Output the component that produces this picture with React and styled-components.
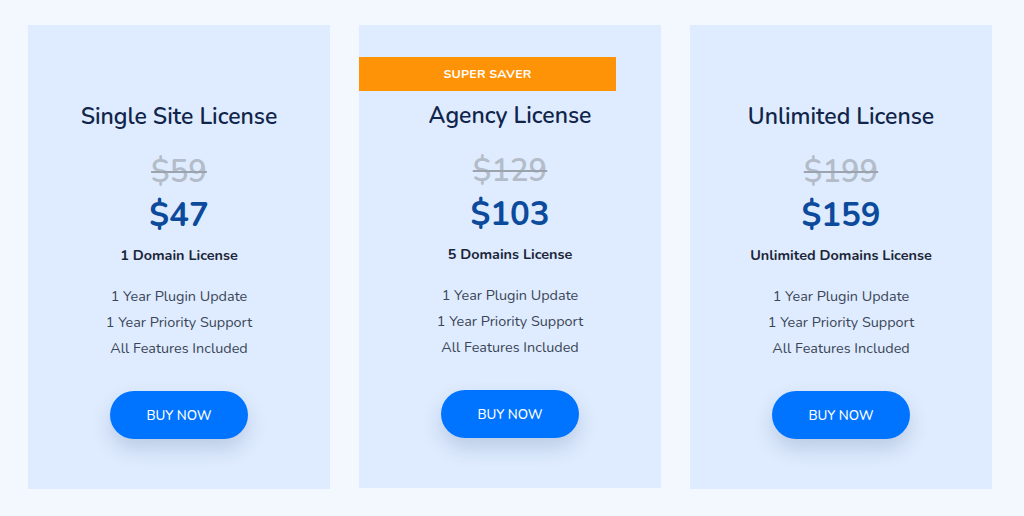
import React from "react";
import styled, { createGlobalStyle } from "styled-components";

const Global = createGlobalStyle`
  html, body { margin: 0; padding: 0; background: #f3f8ff; }
  body { font-family: "Nunito", Lato, "Noto Sans", sans-serif; }
  * { box-sizing: border-box; }
`;

const Page = styled.div`
  width: 1024px;
  height: 516px;
  padding: 25px 32px 0 28px;
  display: grid;
  grid-template-columns: repeat(3, 302px);
  column-gap: 29px;
  align-items: start;
`;

const Card = styled.div`
  position: relative;
  background: #dfecff;
  height: ${(p) => (p.$short ? 463 : 464)}px;
  padding-top: ${(p) => (p.$short ? 76 : 77)}px;
  display: flex;
  flex-direction: column;
  align-items: center;
  text-align: center;
`;

const Ribbon = styled.div`
  position: absolute;
  top: 32px;
  left: 0;
  width: 257px;
  height: 34px;
  padding-bottom: 2px;
  background: #ff9307;
  color: #fff;
  font-size: 12.5px;
  font-weight: 700;
  letter-spacing: 0.2px;
  display: flex;
  align-items: center;
  justify-content: center;
`;

const Title = styled.h2`
  margin: 0;
  font-size: 23px;
  line-height: 30px;
  font-weight: 600;
  color: #11244a;
`;

const OldPrice = styled.div`
  margin-top: 22px;
  font-size: 31px;
  line-height: 36px;
  font-weight: 600;
  color: #b3bcc8;
  text-decoration: line-through;
  text-decoration-color: #9aa3ae;
  text-decoration-thickness: 2px;
`;

const Price = styled.div`
  margin-top: 6px;
  font-size: 33px;
  line-height: 40px;
  font-weight: 700;
  color: #0c4a9c;
`;

const Domains = styled.div`
  margin-top: 9px;
  font-size: 14.4px;
  line-height: 20px;
  font-weight: 700;
  color: #1c2638;
`;

const Features = styled.ul`
  list-style: none;
  margin: 18px 0 0;
  padding: 0;
`;

const Feature = styled.li`
  font-size: 14.4px;
  line-height: 26px;
  color: #3a4556;
`;

const Button = styled.button`
  margin-top: 30px;
  width: 138px;
  height: 48px;
  border: none;
  border-radius: 24px;
  background: #0073ff;
  color: #fff;
  font-family: inherit;
  font-size: 13.4px;
  font-weight: 500;
  box-shadow: 0 10px 20px rgba(30, 60, 110, 0.18);
  cursor: pointer;
`;

const plans = [
  { title: "Single Site License", old: "$59", price: "$47", domains: "1 Domain License" },
  { title: "Agency License", old: "$129", price: "$103", domains: "5 Domains License", ribbon: "SUPER SAVER" },
  { title: "Unlimited License", old: "$199", price: "$159", domains: "Unlimited Domains License" },
];

const features = ["1 Year Plugin Update", "1 Year Priority Support", "All Features Included"];

export default function App() {
  return (
    <>
      <Global />
      <Page>
        {plans.map((p) => (
          <Card key={p.title} $short={!!p.ribbon}>
            {p.ribbon && <Ribbon>{p.ribbon}</Ribbon>}
            <Title>{p.title}</Title>
            <OldPrice>{p.old}</OldPrice>
            <Price>{p.price}</Price>
            <Domains>{p.domains}</Domains>
            <Features>
              {features.map((f) => (
                <Feature key={f}>{f}</Feature>
              ))}
            </Features>
            <Button>BUY NOW</Button>
          </Card>
        ))}
      </Page>
    </>
  );
}
